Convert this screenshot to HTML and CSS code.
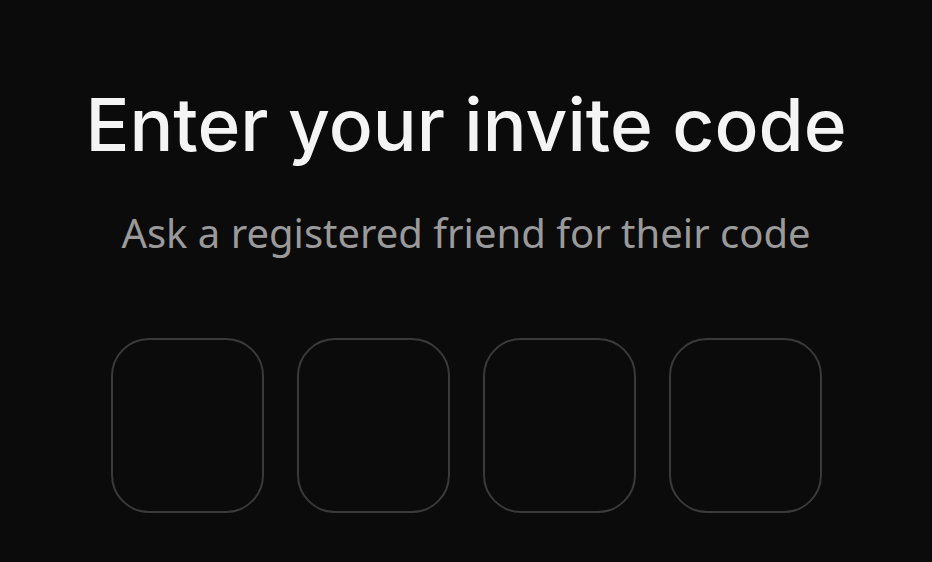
FILE: index.html
```html
<!DOCTYPE html>
<html lang="en">

<head>
    <meta charset="UTF-8">
    <title>Invite Code</title>
    <link rel="stylesheet" href="styles.css">
</head>

<body>

    <main class="invite">
        <h1 class="invite-title">Enter your invite code</h1>
        <p class="invite-hint">Ask a registered friend for their code</p>

        <form class="code-boxes">
            <input class="code-box" type="text" maxlength="1" aria-label="Digit 1">
            <input class="code-box" type="text" maxlength="1" aria-label="Digit 2">
            <input class="code-box" type="text" maxlength="1" aria-label="Digit 3">
            <input class="code-box" type="text" maxlength="1" aria-label="Digit 4">
        </form>
    </main>

</body>

</html>
```

FILE: styles.css
```css
html,
body {
    margin: 0;
    height: 100%;
    background: #0b0b0b;
}

.invite {
    display: flex;
    flex-direction: column;
    align-items: center;
    padding-top: 80px;
}

.invite-title {
    margin: 0;
    font-family: Inter, "Noto Sans", sans-serif;
    font-weight: 500;
    font-size: 73px;
    line-height: 90px;
    color: #f4f4f4;
}

.invite-hint {
    margin: 35px 0 0;
    font-family: "Noto Sans", "Open Sans", sans-serif;
    font-size: 40px;
    line-height: 56px;
    color: #9a9a9a;
}

.code-boxes {
    display: flex;
    gap: 33px;
    margin-top: 77px;
}

.code-box {
    width: 153px;
    height: 175px;
    box-sizing: border-box;
    border: 2px solid #3a3a3a;
    border-radius: 38px;
    background: transparent;
    color: #f4f4f4;
    font-size: 60px;
    text-align: center;
    outline: none;
}
```
